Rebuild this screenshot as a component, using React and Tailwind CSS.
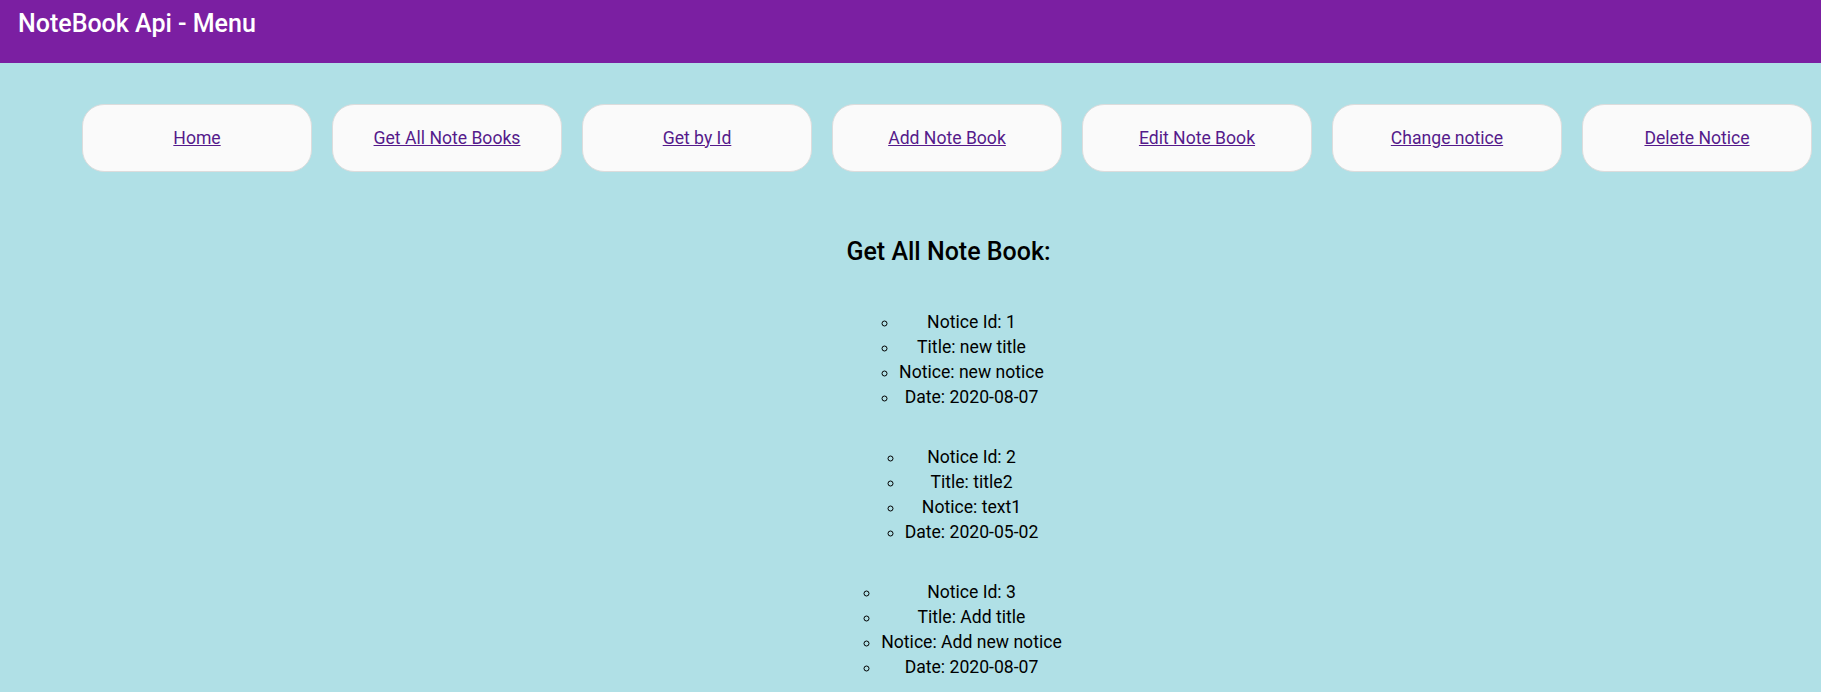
const links = ['Home', 'Get All Note Books', 'Get by Id', 'Add Note Book', 'Edit Note Book', 'Change notice', 'Delete Notice'];

const notes = [
  { id: 1, title: 'new title', notice: 'new notice', date: '2020-08-07' },
  { id: 2, title: 'title2', notice: 'text1', date: '2020-05-02' },
  { id: 3, title: 'Add title', notice: 'Add new notice', date: '2020-08-07' },
];

export default function App() {
  return (
    <div className="min-h-screen bg-[#b0e0e6] font-['Roboto',sans-serif] text-black">
      {/* Header */}
      <header className="h-[63px] bg-[#7b1fa2] px-[18px] pt-[8px]">
        <h1 className="text-[25px] font-medium leading-[32px] text-white">NoteBook Api - Menu</h1>
      </header>

      <main className="pl-[82px]">
        {/* Menu */}
        <nav className="mt-[41px] flex gap-[20px]">
          {links.map((label) => (
            <div
              key={label}
              className="flex h-[68px] w-[230px] shrink-0 items-center justify-center rounded-[22px] border border-[#dcdcdc] bg-[#fafafa]"
            >
              <a href="#" className="text-[17.6px] text-[#551a8b] underline">{label}</a>
            </div>
          ))}
        </nav>

        {/* Note books */}
        <section className="mt-[66px] flex flex-col items-center">
          <h2 className="-ml-[6px] text-[25px] font-medium leading-[28px]">Get All Note Book:</h2>
          <div className="mt-[44px] flex flex-col items-center gap-[35px]">
            {notes.map((n) => (
              <ul key={n.id} className="list-[circle] pl-10 text-center text-[17.6px] leading-[25px]">
                <li>Notice Id: {n.id}</li>
                <li>Title: {n.title}</li>
                <li>Notice: {n.notice}</li>
                <li>Date: {n.date}</li>
              </ul>
            ))}
          </div>
        </section>
      </main>
    </div>
  );
}
